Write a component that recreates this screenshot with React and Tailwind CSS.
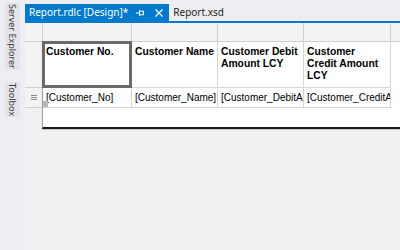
// Report designer (RDLC) tab with a tablix selected
const columns = [
  { w: "w-[89px]", head: ["Customer No."], field: "[Customer_No]" },
  { w: "w-[86px]", head: ["Customer Name"], field: "[Customer_Name]" },
  { w: "w-[86px]", head: ["Customer Debit", "Amount LCY"], field: "[Customer_DebitAmount_LCY]" },
  { w: "w-[87px]", head: ["Customer", "Credit Amount", "LCY"], field: "[Customer_CreditAmount_LCY]" },
];

function PinIcon() {
  return (
    <svg width="8" height="8" viewBox="0 0 8 8" className="shrink-0">
      <path d="M0 4 H3 M3.5 1 V7 M3.5 2.2 H7.4 V5.8 H3.5" stroke="white" strokeWidth="1.1" fill="none" />
    </svg>
  );
}

function CloseIcon() {
  return (
    <svg width="8" height="8" viewBox="0 0 8 8" className="shrink-0">
      <path d="M0.5 0.5 L7.5 7.5 M7.5 0.5 L0.5 7.5" stroke="white" strokeWidth="1.3" />
    </svg>
  );
}

function SideTab({ label }) {
  return (
    <div
      className="bg-[#e4e4e9] text-[#3a3a3a] text-[9px] leading-[11px] py-[2px] px-[1px]"
      style={{ writingMode: "vertical-rl" }}
    >
      {label}
    </div>
  );
}

export default function App() {
  return (
    <div className="w-[400px] h-[250px] flex bg-[#eeeef2] overflow-hidden font-['Noto_Sans',sans-serif]">
      {/* Left tool window strip */}
      <div className="w-[25px] shrink-0 flex flex-col items-start pl-[5px] pt-[3px] gap-[12px]">
        <SideTab label="Server Explorer" />
        <SideTab label="Toolbox" />
      </div>

      <div className="flex-1 flex flex-col min-w-0">
        {/* Document tabs */}
        <div className="h-[21px] pt-[4px] flex items-stretch shrink-0">
          <div className="bg-[#007acc] text-white text-[10px] leading-[17px] pl-[4px] pr-[6px] flex items-center">
            <span>Report.rdlc [Design]*</span>
            <span className="ml-[8px]"><PinIcon /></span>
            <span className="ml-[11px]"><CloseIcon /></span>
          </div>
          <div className="text-[#1e1e1e] text-[10px] leading-[17px] pl-[4px]">Report.xsd</div>
        </div>
        <div className="h-[2px] bg-[#007acc] shrink-0" />

        {/* Designer surface */}
        <div className="flex-1 bg-[#f0f0f0] flex flex-col font-['Liberation_Sans',Arial,sans-serif] text-black">
          {/* Column handles */}
          <div className="flex h-[19px] shrink-0 border-b border-[#cfcfcf]">
            <div className="w-[18px] border-r border-[#cfcfcf] bg-[#f3f3f3]" />
            {columns.map((c, i) => (
              <div key={i} className={`${c.w} border-r border-[#cfcfcf] bg-[#f3f3f3]`} />
            ))}
            <div className="flex-1 bg-[#f3f3f3]" />
          </div>

          <div className="flex">
            {/* Row handles */}
            <div className="w-[18px] shrink-0 flex flex-col">
              <div className="h-[46px] border-r border-b border-[#cfcfcf] bg-[#f3f3f3]" />
              <div className="h-[20px] border-r border-b border-[#cfcfcf] bg-[#f3f3f3] flex items-center justify-center">
                <div className="w-[6px] flex flex-col gap-[1px]">
                  <div className="h-[1px] bg-[#8a8a8a]" />
                  <div className="h-[1px] bg-[#8a8a8a]" />
                  <div className="h-[1px] bg-[#8a8a8a]" />
                </div>
              </div>
            </div>

            {/* Report body */}
            <div className="flex-1 bg-white border-l border-[#a0a0a0] -ml-[1px] h-[87px] border-b-2 border-b-[#1a1a1a] shadow-[0_1px_1px_rgba(0,0,0,0.15)] flex flex-col">
              <div className="flex h-[46px]">
                {columns.map((c, i) => (
                  <div
                    key={i}
                    className={`${c.w} shrink-0 border-r border-b border-[#d6d6d6] pl-[3px] pt-[4px] text-[10.3px] leading-[12px] font-bold whitespace-nowrap relative`}
                  >
                    {c.head.map((l) => (
                      <div key={l}>{l}</div>
                    ))}
                    {i === 0 && (
                      <div className="absolute -left-[1px] -top-[1px] -right-[1px] -bottom-[1px] border-[3px] border-[#6a6a6a]" />
                    )}
                  </div>
                ))}
              </div>
              <div className="flex h-[20px]">
                {columns.map((c, i) => (
                  <div
                    key={i}
                    className={`${c.w} shrink-0 border-r border-b border-[#d6d6d6] pl-[3px] text-[10px] leading-[19px] whitespace-nowrap overflow-hidden relative`}
                  >
                    {c.field}
                    {i === 0 && <div className="absolute left-0 bottom-0 w-[5px] h-[6px] bg-[#b8b8b8]" />}
                  </div>
                ))}
              </div>
            </div>
          </div>
        </div>
      </div>
    </div>
  );
}
